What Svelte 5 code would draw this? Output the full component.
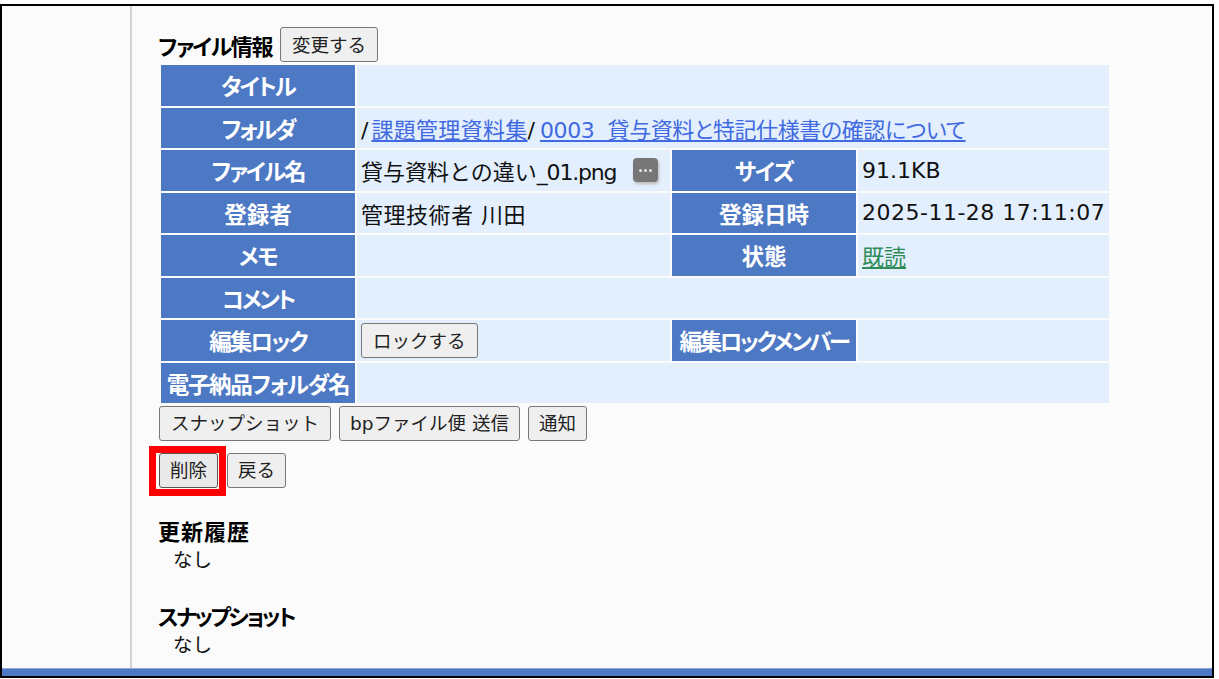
<script>
  const rows = [
    { cells: [{ h: 'タイトル', k: 'b' }, { span: 3 }] },
    { cells: [{ h: 'フォルダ', k: 'c' }, { span: 3, path: true }] },
    { cells: [{ h: 'ファイル名', k: 'b' }, { file: true }, { h: 'サイズ', k: 'a' }, { t: '91.1KB' }] },
    { cells: [{ h: '登録者' }, { t: '管理技術者 川田', wide: true }, { h: '登録日時' }, { t: '2025-11-28 17:11:07', wide: true }] },
    { cells: [{ h: 'メモ', k: 'a' }, {}, { h: '状態' }, { read: true }] },
    { cells: [{ h: 'コメント', k: 'c' }, { span: 3 }] },
    { cells: [{ h: '編集ロック', k: 'b' }, { lock: true }, { h: '編集ロックメンバー', k: 'c' }, {}] },
    { cells: [{ h: '電子納品フォルダ名', k: 'a' }, { span: 3 }] }
  ];
</script>

<div class="frame">
  <aside class="side"></aside>
  <main class="content">
    <div class="title-row">
      <h2 class="tight">ファイル情報</h2>
      <button class="roomy">変更する</button>
    </div>
    <table>
      <colgroup><col class="c1" /><col class="c2" /><col class="c3" /><col class="c4" /></colgroup>
      <tbody>
        {#each rows as row}
          <tr>
            {#each row.cells as c}
              {#if c.h}
                <th class={c.k}>{c.h}</th>
              {:else}
                <td colspan={c.span ?? 1} class:wide={c.wide}>
                  {#if c.path}
                    <span class="sl">/</span><a class="folder" href="#a">課題管理資料集</a><span class="sl second-sl">/</span><a class="sub" href="#b">0003&nbsp;&nbsp;貸与資料と特記仕様書の確認について</a>
                  {:else if c.file}
                    <div class="file">
                      <span>貸与資料との違い<span class="ext">_01.png</span></span>
                      <span class="more"><i></i><i></i><i></i></span>
                    </div>
                  {:else if c.read}
                    <a class="read" href="#r">既読</a>
                  {:else if c.lock}
                    <button class="roomy">ロックする</button>
                  {:else if c.t}
                    {c.t}
                  {/if}
                </td>
              {/if}
            {/each}
          </tr>
        {/each}
      </tbody>
    </table>
    <div class="actions">
      <button class="roomy">スナップショット</button>
      <button>bpファイル便 送信</button>
      <button>通知</button>
    </div>
    <div class="actions second">
      <span class="mark"><button class="pressed">削除</button></span>
      <button>戻る</button>
    </div>
    <section class="history">
      <h2>更新履歴</h2>
      <p>なし</p>
    </section>
    <section class="snap">
      <h2 class="tighter">スナップショット</h2>
      <p>なし</p>
    </section>
  </main>
</div>

<style>
  :global(body) {
    margin: 0;
    background: #fff;
  }
  .frame {
    box-sizing: border-box;
    width: 1214px;
    height: 674px;
    margin-top: 4px;
    border: 2px solid #000;
    background: #fbfbfb;
    display: flex;
    overflow: hidden;
    font-family: "DejaVu Sans", "Noto Sans CJK JP", sans-serif;
    color: #111;
    position: relative;
  }
  .frame::after {
    content: "";
    position: absolute;
    left: 0;
    right: 0;
    bottom: 0;
    height: 7px;
    background: #4d78c4;
    border-top: 1px solid #8ea6d6;
  }
  .side {
    width: 128px;
    flex: none;
    border-right: 2px solid #d4d4d4;
  }
  .content {
    flex: 1;
    padding: 21px 0 0 26px;
  }
  .title-row {
    display: flex;
    align-items: center;
    gap: 8px;
    height: 35px;
  }
  h2 {
    margin: 0;
    font-size: 22px;
    line-height: 30px;
    font-weight: 700;
    font-family: "Noto Sans CJK JP", sans-serif;
    font-feature-settings: "palt";
    color: #000;
    letter-spacing: 1px;
  }
  h2.tight { letter-spacing: -1.4px; }
  h2.tighter { letter-spacing: -2.4px; }
  button {
    box-sizing: border-box;
    height: 35px;
    padding: 3px 10px 0;
    border: 1.5px solid #777;
    border-radius: 3px;
    background: #efefef;
    font: 400 18.5px/1 "DejaVu Sans", "Noto Sans CJK JP", sans-serif;
    color: #222;
    white-space: nowrap;
  }
  button.roomy {
    padding: 3px 11px 0;
  }
  button.pressed {
    border-color: #555;
    background: #e9e9e9;
  }
  table {
    border-collapse: separate;
    border-spacing: 2px 2.4px;
    table-layout: fixed;
    width: 952px;
    margin: 1px 0 0 1px;
  }
  .c1 { width: 194px; }
  .c2 { width: 313px; }
  .c3 { width: 184px; }
  .c4 { width: 251px; }
  tr { height: 40.5px; }
  th {
    background: #4d78c4;
    color: #fff;
    padding: 0;
    font-family: "Noto Sans CJK JP", sans-serif;
    font-feature-settings: "palt";
    font-size: 22.5px;
    font-weight: 700;
    white-space: nowrap;
  }
  th.a { letter-spacing: -1.4px; }
  th.b { letter-spacing: -1.9px; }
  th.c { letter-spacing: -2.4px; }
  td {
    background: #e3effd;
    padding: 0 4px;
    font-size: 22px;
    white-space: nowrap;
    color: #111;
  }
  td.wide { letter-spacing: 0.5px; }
  .sl { margin-right: 3px; }
  .second-sl { margin-right: 5px; }
  .ext { letter-spacing: -1.2px; }
  a { color: #4169e1; }
  a.read { color: #2e8b57; }
  a.folder { letter-spacing: 0.3px; }
  a.sub {
    font-feature-settings: "palt";
    letter-spacing: -0.4px;
  }
  .file {
    display: flex;
    align-items: center;
    justify-content: space-between;
    padding-right: 8px;
  }
  .more {
    width: 25px;
    height: 24px;
    border-radius: 4px;
    background: #777;
    box-shadow: 1px 2px 3px #bbb;
    display: flex;
    align-items: center;
    justify-content: center;
    gap: 2px;
  }
  .more i {
    width: 3px;
    height: 3px;
    border-radius: 50%;
    background: #e4e4e4;
  }
  .actions {
    display: flex;
    gap: 8px;
    margin: 0.5px 0 0 1px;
  }
  .second {
    margin-top: 12px;
    gap: 9px;
  }
  .mark {
    display: block;
    position: relative;
  }
  .mark::after {
    content: "";
    position: absolute;
    inset: -7px -8px -8px -10px;
    border: 7px solid #f00;
    pointer-events: none;
  }
  .history { margin-top: 27px; }
  .snap { margin-top: 27px; }
  p {
    margin: 0;
    padding-left: 15px;
    font-size: 19.5px;
    line-height: 28px;
    font-family: "Noto Sans CJK JP", sans-serif;
  }
</style>
